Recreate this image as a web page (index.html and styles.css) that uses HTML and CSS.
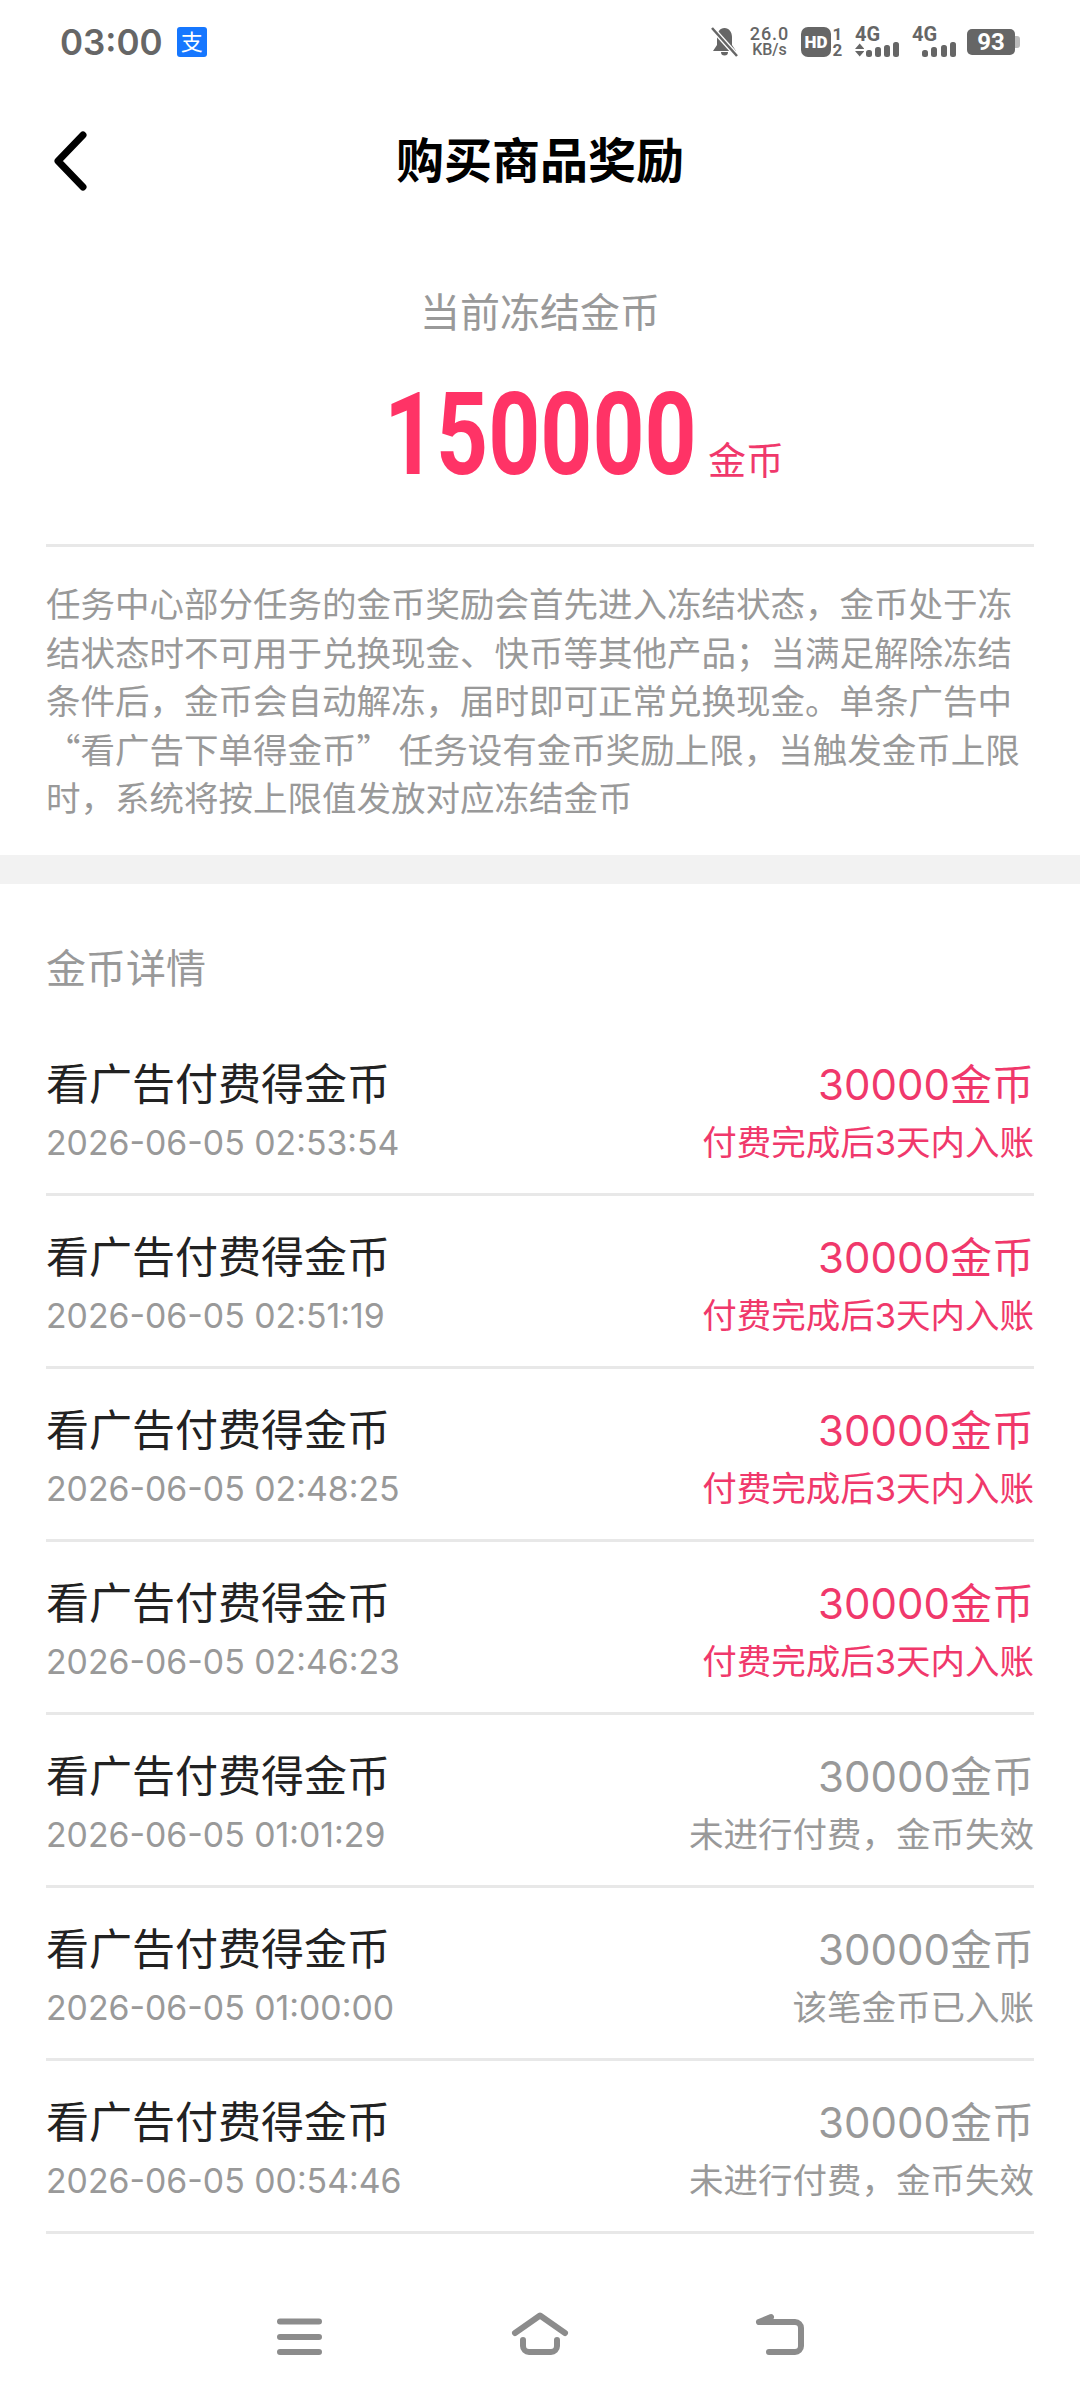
FILE: index.html
```html
<!DOCTYPE html>
<html lang="zh-CN">
<head>
  <meta charset="UTF-8">
  <meta name="viewport" content="width=device-width, initial-scale=1.0">
  <title>购买商品奖励</title>
  <link rel="stylesheet" href="styles.css">
</head>
<body>
  <div class="page">
    <div class="status">
      <div class="status-left">
        <span class="time">03:00</span>
        <span class="alipay">支</span>
      </div>
      <div class="status-right">
        <svg class="bell" width="27" height="30" viewBox="0 0 27 30">
          <path d="M13.5 1C9 1 6 5 6 10v8l-4 6h23l-4-6v-8c0-5-3-9-7.500-9z" fill="#666"/>
          <path d="M10 25a3.500 3.500 0 0 0 7 0z" fill="#666"/>
          <path d="M1 1l25 28" stroke="#fff" stroke-width="5"/>
          <path d="M1 1l25 28" stroke="#666" stroke-width="2.500"/>
        </svg>
        <div class="speed"><span>26.0</span><span>KB/s</span></div>
        <div class="hd">HD</div>
        <div class="sim"><span>1</span><span>2</span></div>
        <div class="net">
          <span class="net-label">4G</span>
          <div class="bars">
            <svg class="arrows" width="10" height="14" viewBox="0 0 10 14">
              <path d="M5 0l5 6H0zM5 14l5-6H0z" fill="#666"/>
            </svg>
            <i class="b1"></i><i class="b2"></i><i class="b3"></i><i class="b4"></i>
          </div>
        </div>
        <div class="net">
          <span class="net-label">4G</span>
          <div class="bars">
            <i class="b1"></i><i class="b2"></i><i class="b3"></i><i class="b4"></i>
          </div>
        </div>
        <div class="battery"><span class="battery-num">93</span><i class="battery-cap"></i></div>
      </div>
    </div>

    <div class="header">
      <svg class="back" width="36" height="60" viewBox="0 0 36 60">
        <path d="M31 4L6 30l25 26" fill="none" stroke="#000" stroke-width="7" stroke-linecap="round" stroke-linejoin="round"/>
      </svg>
      <h1>购买商品奖励</h1>
    </div>

    <div class="summary">
      <div class="summary-label">当前冻结金币</div>
      <div class="summary-amount"><span class="amount">150000</span><span class="unit">金币</span></div>
    </div>

    <div class="note">
      <p>任务中心部分任务的金币奖励会首先进入冻结状态，金币处于冻<br>结状态时不可用于兑换现金、快币等其他产品；当满足解除冻结<br>条件后，金币会自动解冻，届时即可正常兑换现金。单条广告中<br>“看广告下单得金币” 任务设有金币奖励上限，当触发金币上限<br>时，系统将按上限值发放对应冻结金币</p>
    </div>

    <div class="band"></div>

    <div class="detail">
      <div class="detail-title">金币详情</div>

      <div class="row active">
        <div><div class="row-name">看广告付费得金币</div><div class="row-date">2026-06-05 02:53:54</div></div>
        <div class="row-right"><div class="row-coin">30000金币</div><div class="row-state">付费完成后3天内入账</div></div>
      </div>
      <div class="row active">
        <div><div class="row-name">看广告付费得金币</div><div class="row-date">2026-06-05 02:51:19</div></div>
        <div class="row-right"><div class="row-coin">30000金币</div><div class="row-state">付费完成后3天内入账</div></div>
      </div>
      <div class="row active">
        <div><div class="row-name">看广告付费得金币</div><div class="row-date">2026-06-05 02:48:25</div></div>
        <div class="row-right"><div class="row-coin">30000金币</div><div class="row-state">付费完成后3天内入账</div></div>
      </div>
      <div class="row active">
        <div><div class="row-name">看广告付费得金币</div><div class="row-date">2026-06-05 02:46:23</div></div>
        <div class="row-right"><div class="row-coin">30000金币</div><div class="row-state">付费完成后3天内入账</div></div>
      </div>
      <div class="row">
        <div><div class="row-name">看广告付费得金币</div><div class="row-date">2026-06-05 01:01:29</div></div>
        <div class="row-right"><div class="row-coin">30000金币</div><div class="row-state">未进行付费，金币失效</div></div>
      </div>
      <div class="row">
        <div><div class="row-name">看广告付费得金币</div><div class="row-date">2026-06-05 01:00:00</div></div>
        <div class="row-right"><div class="row-coin">30000金币</div><div class="row-state">该笔金币已入账</div></div>
      </div>
      <div class="row">
        <div><div class="row-name">看广告付费得金币</div><div class="row-date">2026-06-05 00:54:46</div></div>
        <div class="row-right"><div class="row-coin">30000金币</div><div class="row-state">未进行付费，金币失效</div></div>
      </div>
    </div>

    <div class="navbar">
      <svg width="60" height="44" viewBox="0 0 60 44">
        <path d="M10 9.500h39M10 25h39M10 40h39" stroke="#8c8c8c" stroke-width="6" stroke-linecap="round"/>
      </svg>
      <svg width="60" height="44" viewBox="0 0 60 44">
        <path d="M5 21L30 3.500 55 21" fill="none" stroke="#8c8c8c" stroke-width="6" stroke-linecap="round" stroke-linejoin="round"/>
        <path d="M13 28v6a6 6 0 0 0 6 6h22a6 6 0 0 0 6-6v-6" fill="none" stroke="#8c8c8c" stroke-width="6" stroke-linecap="round"/>
      </svg>
      <svg width="60" height="44" viewBox="0 0 60 44">
        <path d="M9 10l12-5M9 10h36a6 6 0 0 1 6 6v18a6 6 0 0 1-6 6H19" fill="none" stroke="#8c8c8c" stroke-width="6" stroke-linecap="round" stroke-linejoin="round"/>
      </svg>
    </div>
  </div>
</body>
</html>
```

FILE: styles.css
```css
* { box-sizing: border-box; }
body {
  margin: 0;
  background: #fff;
  font-family: Inter, "Noto Sans CJK SC", sans-serif;
}
.page { width: 1080px; height: 2400px; overflow: hidden; display: flex; flex-direction: column; }

/* status bar */
.status { height: 84px; padding: 0 60px; display: flex; justify-content: space-between; align-items: center; color: #666; }
.status-left { display: flex; align-items: center; gap: 14px; }
.time { font-size: 35px; font-weight: 600; line-height: 44px; }
.alipay { width: 30px; height: 30px; border-radius: 3px; background: #1677ff; color: #fff; font-size: 22px; line-height: 30px; text-align: center; }
.status-right { display: flex; align-items: center; height: 32px; }
.bell { margin-right: 12px; }
.speed { width: 39px; display: flex; flex-direction: column; align-items: center; font-family: Roboto, sans-serif; font-size: 16px; line-height: 16px; font-weight: 500; margin-right: 12px; }
.speed span:first-child { font-size: 18px; letter-spacing: 1px; }
.hd { width: 30px; height: 30px; border-radius: 7px; background: #666; color: #fff; font-family: Roboto, sans-serif; font-size: 17px; font-weight: 900; line-height: 30px; text-align: center; }
.sim { display: flex; flex-direction: column; align-items: center; width: 13px; font-family: Roboto, sans-serif; font-size: 17px; line-height: 16px; font-weight: 700; margin-right: 11px; }
.net { position: relative; height: 30px; width: 44px; margin-right: 13px; }
.net:nth-child(6) { margin-right: 11px; }
.net-label { position: absolute; left: 0; top: -2px; font-family: Roboto, sans-serif; font-size: 20px; line-height: 18px; font-weight: 700; }
.bars { height: 30px; display: flex; align-items: flex-end; gap: 3.5px; justify-content: flex-end; }
.bars i { width: 6px; background: #666; border-radius: 2.5px; display: block; }
.bars .b1 { height: 7px; }
.bars .b2 { height: 10px; }
.bars .b3 { height: 12px; }
.bars .b4 { height: 15px; }
.arrows { margin-right: -2px; }
.battery { display: flex; align-items: center; }
.battery-num { width: 48px; height: 26px; border-radius: 5px; background: #666; color: #fff; font-family: Roboto, sans-serif; font-size: 24px; font-weight: 700; line-height: 26px; text-align: center; }
.battery-cap { width: 5px; height: 12px; background: #bbb; border-radius: 0 3px 3px 0; display: block; }

/* title bar */
.header { height: 154px; position: relative; display: flex; align-items: center; justify-content: center; }
.back { position: absolute; left: 52px; top: 47px; }
h1 { margin: 0; font-size: 48px; font-weight: 700; color: #000; line-height: 60px; }

/* frozen total */
.summary { margin: 50px 46px 0; height: 259px; border-bottom: 3px solid #e8e8e8; text-align: center; }
.summary-label { font-size: 40px; line-height: 50px; color: #999; }
.summary-amount { display: flex; justify-content: center; align-items: baseline; margin-top: 37px; padding-left: 88px; height: 120px; }
.amount { display: inline-block; width: 324px; font-family: Roboto, sans-serif; font-size: 115px; font-weight: 700; line-height: 120px; color: #ff3366; text-align: left; transform: scaleX(.79); transform-origin: left; }
.unit { font-size: 38px; color: #f0386b; line-height: 40px; }

/* rules text */
.note { padding: 31px 40px 0 46px; height: 308px; }
.note p { margin: 0; font-family: "Noto Sans CJK SC", sans-serif; font-size: 34.5px; line-height: 48.5px; color: #999; white-space: nowrap; }
.band { height: 29px; background: #f2f2f2; }

/* list */
.detail { padding: 0 46px; }
.detail-title { font-size: 40px; line-height: 50px; color: #999; padding-top: 60px; height: 139px; }
.row { height: 173px; padding-top: 36px; border-bottom: 3px solid #e8e8e8; display: flex; justify-content: space-between; }
.row-name { font-size: 43px; line-height: 50px; color: #222; }
.row-date { font-size: 33.8px; line-height: 50px; color: #999; margin-top: 9px; }
.row-right { text-align: right; color: #999; }
.row-coin { font-size: 42px; line-height: 50px; padding-top: 1px; }
.row-state { font-size: 34.5px; line-height: 50px; margin-top: 8px; }
.row.active .row-right { color: #f0386b; }

/* bottom nav */
.navbar { flex: 1; display: flex; justify-content: center; align-items: center; gap: 180px; padding-top: 34px; }
```
